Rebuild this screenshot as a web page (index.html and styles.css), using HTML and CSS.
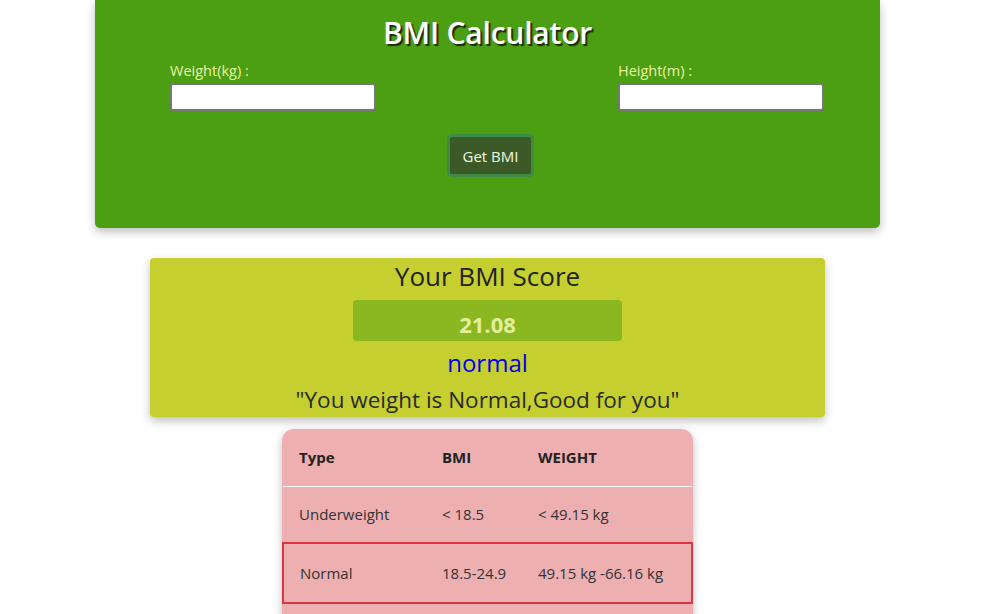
FILE: index.html
```html
<!DOCTYPE html>
<html>
<head>
<meta charset="utf-8">
<link rel="stylesheet" href="styles.css">
</head>
<body>
<div class="page">
  <section class="calc">
    <h1 class="title">BMI Calculator</h1>
    <div class="fields">
      <div class="field">
        <label class="label">Weight(kg) :</label>
        <input class="input" type="text">
      </div>
      <div class="field">
        <label class="label">Height(m) :</label>
        <input class="input" type="text">
      </div>
    </div>
    <div class="actions">
      <button class="btn">Get BMI</button>
    </div>
  </section>

  <section class="score">
    <h2 class="score-title">Your BMI Score</h2>
    <div class="score-box">21.08</div>
    <div class="status">normal</div>
    <div class="quote">"You weight is Normal,Good for you"</div>
  </section>

  <div class="table-wrap">
    <table class="bmi-table">
      <thead>
        <tr><th>Type</th><th>BMI</th><th>WEIGHT</th></tr>
      </thead>
      <tbody>
        <tr><td>Underweight</td><td>&lt; 18.5</td><td>&lt; 49.15 kg</td></tr>
        <tr class="active"><td>Normal</td><td>18.5-24.9</td><td>49.15 kg -66.16 kg</td></tr>
      </tbody>
    </table>
  </div>
</div>
</body>
</html>
```

FILE: styles.css
```css
* { box-sizing: border-box; }
html, body { margin: 0; padding: 0; background: #ffffff; }
body {
  font-family: "Open Sans", "Noto Sans", "Liberation Sans", sans-serif;
  color: #222;
  overflow: hidden;
  height: 614px;
}
.page {
  width: 975px;
  display: flex;
  flex-direction: column;
  align-items: center;
}
.calc {
  width: 785px;
  height: 228px;
  background: #4c9e12;
  border-radius: 0 0 5px 5px;
  box-shadow: 0 4px 10px rgba(0,0,0,0.25);
  padding-top: 12px;
}
.title {
  margin: 0;
  text-align: center;
  color: #fff;
  font-size: 30px;
  font-weight: 600;
  line-height: 42px;
  letter-spacing: -0.2px;
  text-shadow: 2px 2px 1px #1b2a10;
}
.fields {
  display: flex;
  justify-content: space-between;
  margin-top: 6px;
  padding: 0 56px 0 75px;
}
.field {
  display: flex;
  flex-direction: column;
}
.label {
  color: #e9f3a5;
  font-size: 14.5px;
  line-height: 21px;
  height: 23px;
}
.input {
  width: 206px;
  height: 28px;
  border: 2px solid #767676;
  border-radius: 3px;
  background: #fff;
  margin: 0;
  padding: 0;
}
.actions {
  display: flex;
  justify-content: center;
  margin-top: 23px;
}
.btn {
  width: 87px;
  height: 43px;
  background: #3b5a28;
  color: #f2f6e4;
  border: 3px solid #3d8b44;
  border-radius: 5px;
  font-family: inherit;
  font-size: 15px;
  padding: 0;
  margin-left: 6px;
}
.score {
  width: 675px;
  height: 159px;
  margin-top: 30px;
  background: #c5cf2f;
  border-radius: 4px;
  box-shadow: 0 4px 10px rgba(0,0,0,0.25);
  display: flex;
  flex-direction: column;
  align-items: center;
}
.score-title {
  margin: 0;
  font-size: 26px;
  font-weight: 500;
  line-height: 36px;
  color: #222;
}
.score-box {
  width: 269px;
  height: 41px;
  margin-top: 6px;
  background: #8bb721;
  border-radius: 4px;
  color: #e3ef9c;
  font-size: 22px;
  font-weight: 700;
  line-height: 48px;
  text-align: center;
}
.status {
  color: #0000ee;
  font-size: 24px;
  line-height: 44px;
}
.quote {
  font-size: 22.5px;
  line-height: 30px;
  color: #2a2a2a;
}
.table-wrap {
  width: 411px;
  margin-top: 12px;
  border-radius: 12px 12px 0 0;
  background: #edafb0;
  box-shadow: 0 3px 8px rgba(0,0,0,0.25);
  overflow: hidden;
  padding-bottom: 40px;
}
.bmi-table {
  width: 100%;
  border-collapse: collapse;
  font-size: 15px;
}
.bmi-table th, .bmi-table td {
  text-align: left;
  height: 57px;
  padding: 0 0 0 16px;
  white-space: nowrap;
}
.bmi-table th {
  font-weight: 700;
  color: #222;
  border-bottom: 1px solid #fff;
}
.bmi-table td { color: #333; }
.bmi-table th:nth-child(1), .bmi-table td:nth-child(1) { width: 143px; }
.bmi-table th:nth-child(2), .bmi-table td:nth-child(2) { width: 96px; padding-left: 16px; }
.bmi-table tr.active td {
  border-top: 2px solid #dc3545;
  border-bottom: 2px solid #dc3545;
  height: 60px;
}
.bmi-table tr.active td:first-child { border-left: 2px solid #dc3545; padding-left: 16px; }
.bmi-table tr.active td:last-child { border-right: 2px solid #dc3545; }
```
